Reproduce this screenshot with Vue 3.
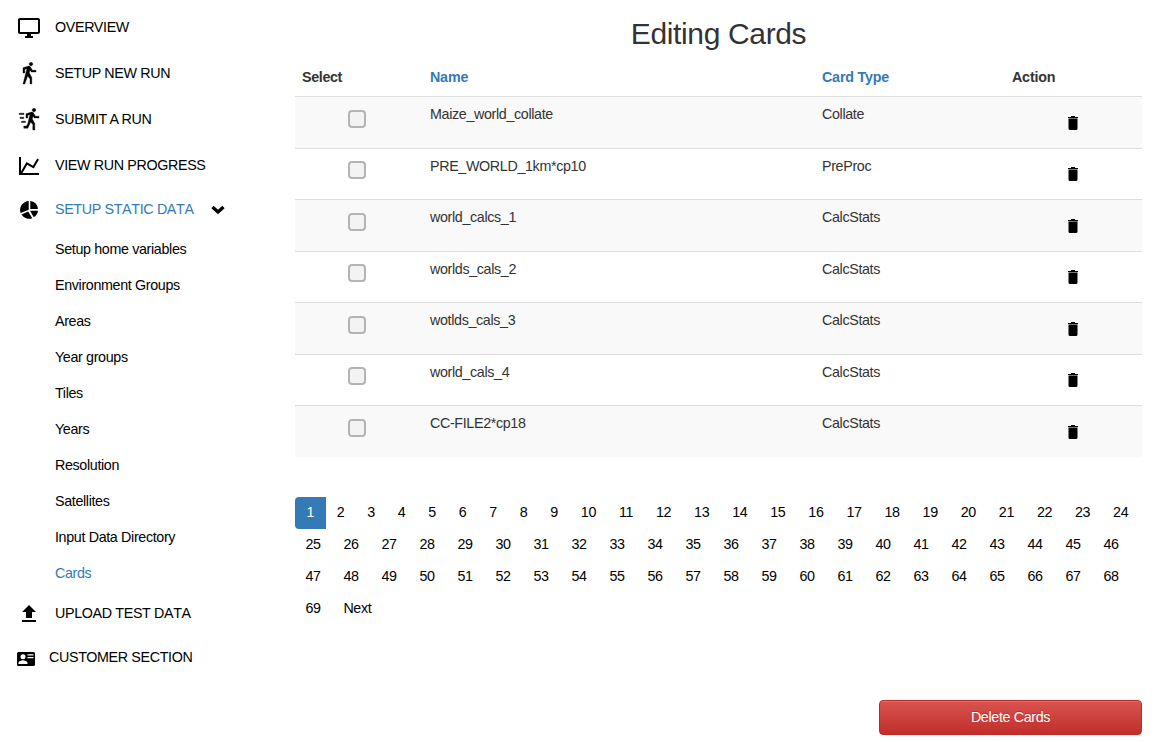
<script setup>
const top = [
  { t: 'OVERVIEW', i: 'monitor' },
  { t: 'SETUP NEW RUN', i: 'walk' },
  { t: 'SUBMIT A RUN', i: 'run' },
  { t: 'VIEW RUN PROGRESS', i: 'chart' },
]
const paths = {
  monitor: 'M21 2H3c-1.1 0-2 .9-2 2v12c0 1.1.9 2 2 2h7v2H8v2h8v-2h-2v-2h7c1.1 0 2-.9 2-2V4c0-1.1-.9-2-2-2zm0 14H3V4h18v12z',
  walk: 'M14.12,10H19V8.2H15.38L13.38,4.87C13.08,4.37 12.54,4.03 11.92,4.03C11.74,4.03 11.58,4.06 11.42,4.11L6,5.8V11H7.8V7.33L9.91,6.67L6,22H7.8L10.67,13.89L13,17V22H14.8V15.59L12.31,11.05L13.04,8.18M14,3.8C15,3.8 15.8,3 15.8,2C15.8,1 15,0.2 14,0.2C13,0.2 12.2,1 12.2,2C12.2,3 13,3.8 14,3.8Z',
  run: 'M17.12,10H22V8.2H18.38L16.38,4.87C16.08,4.37 15.54,4.03 14.92,4.03C14.74,4.03 14.58,4.06 14.42,4.11L9,5.8V10H10.8V7.33L12.91,6.67L10.9,15.2L9.6,18H6.8V20.2H10.8L13.67,13.89L15.8,16.5V22H17.8V15.59L15.31,11.05L16.04,8.18M17,3.8C18,3.8 18.8,3 18.8,2C18.8,1 18,.2 17,.2C16,.2 15.2,1 15.2,2C15.2,3 16,3.8 17,3.8ZM2.2 5.200h4.800v1.300H2.200zM3 9.200h3.800v1.300H3zM4.500 13.200h4v1.300H4.500z',
  chart: 'M16,11.78L20.24,4.45L21.97,5.45L16.74,14.5L10.23,10.75L5.46,19H22V21H2V3H4V17.54L9.5,8L16,11.78Z',
}
const subs = ['Setup home variables', 'Environment Groups', 'Areas', 'Year groups', 'Tiles', 'Years', 'Resolution', 'Satellites', 'Input Data Directory', 'Cards']
const rows = [
  ['Maize_world_collate', 'Collate'],
  ['PRE_WORLD_1km*cp10', 'PreProc'],
  ['world_calcs_1', 'CalcStats'],
  ['worlds_cals_2', 'CalcStats'],
  ['wotlds_cals_3', 'CalcStats'],
  ['world_cals_4', 'CalcStats'],
  ['CC-FILE2*cp18', 'CalcStats'],
]
</script>

<template>
  <div class="page">
    <nav class="side">
      <a v-for="m in top" :key="m.t" class="item">
        <svg class="ico" :class="m.i" viewBox="0 0 24 24"><path :d="paths[m.i]" /></svg>
        <span>{{ m.t }}</span>
      </a>
      <a class="item static">
        <svg class="ico" viewBox="0 0 24 24">
          <path d="M13.300 3a8.300 8.300 0 0 1 7.700 8H13.300zM11.700 3v8.700L3.600 15A9 9 0 0 1 11.700 3zM4.500 16.500l6.700-3 4 6.700a9 9 0 0 1-10.700-3.700zM13 12.800h8a9 9 0 0 1-4.200 6.500z" />
        </svg>
        <span>SETUP STATIC DATA</span>
        <svg class="chev" viewBox="0 0 14 10"><path d="M1.500 2l5.500 5 5.500-5" /></svg>
      </a>
      <div class="subs">
        <a v-for="s in subs" :key="s" :class="{ on: s === 'Cards' }">{{ s }}</a>
      </div>
      <a class="item low upload">
        <svg class="ico" viewBox="0 0 24 24"><path d="M5 20h14v-2H5zM9 16h6v-6h4l-7-7-7 7h4z" /></svg>
        <span>UPLOAD TEST DATA</span>
      </a>
      <a class="item low">
        <svg class="card" viewBox="0 0 18 14">
          <path fill-rule="evenodd" d="M1.500 0h15A1.500 1.500 0 0 1 18 1.500v11a1.500 1.500 0 0 1-1.500 1.500h-15A1.500 1.500 0 0 1 0 12.500v-11A1.500 1.500 0 0 1 1.500 0zM6 2.200a2.500 2.500 0 1 0 0 5 2.500 2.500 0 0 0 0-5zM1.500 12h9v-1c0-1.700-3-2.700-4.500-2.700S1.500 9.300 1.500 11zM10.500 2.200h6v1.200h-6zM10.500 5h6v1.200h-6z" />
        </svg>
        <span>CUSTOMER SECTION</span>
      </a>
    </nav>
    <main class="main">
      <h2>Editing Cards</h2>
      <table>
        <thead>
          <tr><th class="c1">Select</th><th class="c2 blue">Name</th><th class="c3 blue">Card Type</th><th>Action</th></tr>
        </thead>
        <tbody>
          <tr v-for="r in rows" :key="r[0]">
            <td><span class="check"></span></td>
            <td>{{ r[0] }}</td>
            <td>{{ r[1] }}</td>
            <td><svg class="trash" viewBox="0 0 10 14"><path d="M3 0h4v1h3v1H0V1h3zM.5 3h9v9.500A1.500 1.500 0 0 1 8 14H2A1.500 1.500 0 0 1 .5 12.500z" /><path class="rim" d="M.5 2h9v1h-9z" /></svg></td>
          </tr>
        </tbody>
      </table>
      <ul class="pages">
        <li v-for="n in 69" :key="n" :class="{ cur: n === 1 }">{{ n }}</li>
        <li>Next</li>
      </ul>
      <button>Delete Cards</button>
    </main>
  </div>
</template>

<style>
body { margin: 0; background: #fff; }
</style>
<style scoped>
* { box-sizing: border-box; }
.page { display: flex; width: 1155px; height: 742px; overflow: hidden; font: 14.300px/20px "Liberation Sans", Arial, sans-serif; letter-spacing: -.35px; color: #333; }
.side { width: 295px; padding-top: 4px; color: #000; }
.item { display: flex; align-items: center; height: 46px; padding-left: 17px; }
.item span { white-space: nowrap; }
.ico { width: 24px; height: 24px; margin: 2px 14px 0 0; }
.walk, .run { stroke: #000; stroke-width: .35; }
.static { height: 43px; padding-bottom: 1px; color: #337ab7; font-kerning: none; }
.static .ico { fill: #000; }
.upload { font-kerning: none; }
.chev { width: 14px; height: 10px; margin: 2px 0 0 17px; fill: none; stroke: #000; stroke-width: 3.300; }
.subs a { display: flex; align-items: center; height: 36px; padding-left: 55px; }
.subs .on { color: #337ab7; }
.low { height: 44px; }
.card { width: 18px; height: 14px; margin: 4px 14px 0 0; }
.main { width: 847px; display: flex; flex-direction: column; }
h2 { margin: 17px 0 11px; font-size: 30px; line-height: 33px; font-weight: normal; text-align: center; }
table { width: 847px; table-layout: fixed; border-collapse: separate; border-spacing: 0; }
th { height: 35px; padding: 6px 8px 9px; text-align: left; vertical-align: top; letter-spacing: -.2px; }
.c1 { width: 127px; padding-left: 7px; letter-spacing: -.35px; }
.c2 { width: 392px; }
.c3 { width: 190px; }
.blue { color: #337ab7; }
td { height: 51.500px; padding: 7px 8px; border-top: 1px solid #ddd; vertical-align: top; }
tbody tr:nth-child(odd) { background: #f9f9f9; }
.check { display: block; width: 18px; height: 18px; margin: 5.800px 0 0 45px; border: 2px solid #b4b4b4; border-radius: 4px; background: #f3f3f3; }
.trash { display: block; width: 10px; height: 14px; margin: 11.800px 0 0 56px; fill: #000; }
.rim { fill: #777; }
.pages { list-style: none; margin: 40px 0 0; padding: 0; color: #000; height: 128px; }
.pages li { float: left; margin-left: -1px; padding: 5px 12.410px 7px 11.400px; height: 32px; }
.pages li:nth-child(-n+24) { padding-right: 12.510px; }
.pages li.cur { margin-left: 0; padding-right: 12.410px; color: #fff; background: #337ab7; border-radius: 4px 0 0 4px; }
button { align-self: flex-end; width: 263px; height: 35px; margin-top: 75px; padding: 0; font: inherit; letter-spacing: inherit; color: #fff; border: 1px solid #b92c28; border-radius: 4px; background: linear-gradient(#d9534f, #c12e2a); box-shadow: inset 0 1px 0 rgba(255,255,255,.15), 0 1px 1px rgba(0,0,0,.075); text-shadow: 0 -1px 0 rgba(0,0,0,.2); }
</style>
